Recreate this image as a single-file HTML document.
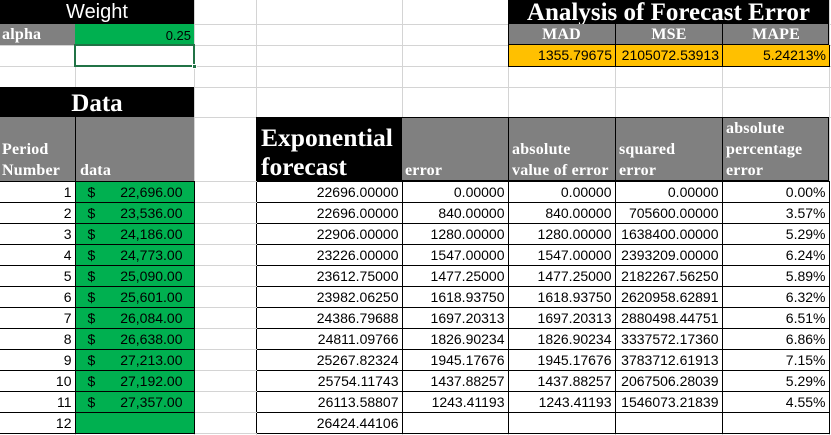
<!DOCTYPE html>
<html><head><meta charset="utf-8"><style>
*{margin:0;padding:0;box-sizing:border-box}
body{width:831px;height:435px;overflow:hidden;background:#fff;position:relative;font-family:"Liberation Sans",sans-serif}
.gv{position:absolute;top:0;width:1px;height:435px;background:#d4d4d4}
.gh{position:absolute;left:0;height:1px;width:831px;background:#d4d4d4}
.b{position:absolute}
.hd{font-family:"Liberation Serif",serif;font-weight:bold;color:#fff}
.sm{font-size:16px;letter-spacing:0.2px}
table{position:absolute;left:0;top:181px;border-collapse:collapse;table-layout:fixed;font-size:14px}
td{height:21px;border:1px solid #000;text-align:right;padding:0 3px 0 0;white-space:nowrap;line-height:19px;overflow:hidden}
td.c{border-top:1px solid #d4d4d4;border-bottom:1px solid #d4d4d4;border-right:none}
td.a{border-left:none}
td.g{background:#00b050;text-align:left;padding-left:12px;padding-right:11px}
td.g span{float:right}
</style></head><body>
<div class="gv" style="left:75px"></div><div class="gv" style="left:194px"></div><div class="gv" style="left:256px"></div><div class="gv" style="left:402px"></div><div class="gv" style="left:508px"></div><div class="gv" style="left:615px"></div><div class="gv" style="left:722px"></div><div class="gv" style="left:829px"></div>
<div class="gh" style="top:24px"></div><div class="gh" style="top:45px"></div><div class="gh" style="top:66px"></div><div class="gh" style="top:87px"></div><div class="gh" style="top:117px"></div>

<div class="b" style="left:0;top:0;width:194px;height:24px;background:#000;color:#fff;font-size:20px;text-align:center;line-height:24px">Weight</div>
<div class="b hd sm" style="left:0;top:24px;width:75px;height:21px;background:#808080;line-height:21px;padding-left:2px">alpha</div>
<div class="b" style="left:75px;top:24px;width:119px;height:21px;background:#00b050;font-size:13px;line-height:23px;text-align:right;padding-right:3px">0.25</div>
<div class="b" style="left:74px;top:44px;width:121px;height:23px;border:2px solid #217346"></div>
<div class="b" style="left:192px;top:64px;width:5px;height:5px;background:#217346;border:1px solid #fff"></div>

<div class="b hd" style="left:0;top:87px;width:194px;height:30px;background:#000;font-size:25px;text-align:center;line-height:33px">Data</div>
<div class="b hd sm" style="left:0;top:117px;width:75px;height:64px;background:#808080;line-height:21px;padding:22px 0 0 2px">Period<br>Number</div>
<div class="b hd sm" style="left:75px;top:117px;width:119px;height:64px;background:#808080;border-left:1px solid #000;line-height:21px;padding:43px 0 0 4px">data</div>

<div class="b hd" style="left:256px;top:117px;width:146px;height:64px;background:#000;font-size:25.5px;line-height:29px;padding:6px 0 0 5px;white-space:nowrap">Exponential<br>forecast</div>
<div class="b hd" style="left:402px;top:117px;width:427px;height:64px;background:#808080;border:1px solid #000;border-left:none"></div>
<div class="b hd sm" style="left:402px;top:117px;width:106px;height:64px;line-height:21px;padding:43px 0 0 3px">error</div>
<div class="b hd sm" style="left:508px;top:117px;width:107px;height:64px;border-left:1px solid #000;line-height:21px;padding:22px 0 0 3px;white-space:nowrap">absolute<br>value of error</div>
<div class="b hd sm" style="left:615px;top:117px;width:107px;height:64px;border-left:1px solid #000;line-height:21px;padding:22px 0 0 3px">squared<br>error</div>
<div class="b hd sm" style="left:722px;top:117px;width:107px;height:64px;border-left:1px solid #000;line-height:21px;padding:1px 0 0 3px;white-space:nowrap">absolute<br>percentage<br>error</div>

<div class="b hd" style="left:508px;top:0;width:321px;height:24px;background:#000;font-size:25px;text-align:center;line-height:25px;white-space:nowrap">Analysis of Forecast Error</div>
<div class="b hd" style="left:508px;top:24px;width:321px;height:21px;background:#808080;border:1px solid #000;border-top:none"></div>
<div class="b hd sm" style="left:508px;top:24px;width:107px;height:21px;text-align:center;line-height:21px">MAD</div>
<div class="b hd sm" style="left:615px;top:24px;width:107px;height:21px;border-left:1px solid #000;text-align:center;line-height:21px">MSE</div>
<div class="b hd sm" style="left:722px;top:24px;width:107px;height:21px;border-left:1px solid #000;text-align:center;line-height:21px">MAPE</div>
<div class="b" style="left:508px;top:45px;width:322px;height:22px;background:#ffc000;border:1px solid #000;border-top:none"></div>
<div class="b" style="left:508px;top:45px;width:107px;height:21px;font-size:14px;text-align:right;line-height:21px;padding-right:3px">1355.79675</div>
<div class="b" style="left:615px;top:45px;width:107px;height:21px;border-left:1px solid #000;font-size:14px;text-align:right;line-height:21px;padding-right:3px">2105072.53913</div>
<div class="b" style="left:722px;top:45px;width:107px;height:21px;border-left:1px solid #000;font-size:14px;text-align:right;line-height:21px;padding-right:3px">5.24213%</div>

<table>
<colgroup><col style="width:75px"><col style="width:119px"><col style="width:62px"><col style="width:146px"><col style="width:106px"><col style="width:107px"><col style="width:107px"><col style="width:107px"></colgroup>
<tr><td class="a">1</td><td class="g">$<span>22,696.00</span></td><td class="c"></td><td>22696.00000</td><td>0.00000</td><td>0.00000</td><td>0.00000</td><td>0.00%</td></tr>
<tr><td class="a">2</td><td class="g">$<span>23,536.00</span></td><td class="c"></td><td>22696.00000</td><td>840.00000</td><td>840.00000</td><td>705600.00000</td><td>3.57%</td></tr>
<tr><td class="a">3</td><td class="g">$<span>24,186.00</span></td><td class="c"></td><td>22906.00000</td><td>1280.00000</td><td>1280.00000</td><td>1638400.00000</td><td>5.29%</td></tr>
<tr><td class="a">4</td><td class="g">$<span>24,773.00</span></td><td class="c"></td><td>23226.00000</td><td>1547.00000</td><td>1547.00000</td><td>2393209.00000</td><td>6.24%</td></tr>
<tr><td class="a">5</td><td class="g">$<span>25,090.00</span></td><td class="c"></td><td>23612.75000</td><td>1477.25000</td><td>1477.25000</td><td>2182267.56250</td><td>5.89%</td></tr>
<tr><td class="a">6</td><td class="g">$<span>25,601.00</span></td><td class="c"></td><td>23982.06250</td><td>1618.93750</td><td>1618.93750</td><td>2620958.62891</td><td>6.32%</td></tr>
<tr><td class="a">7</td><td class="g">$<span>26,084.00</span></td><td class="c"></td><td>24386.79688</td><td>1697.20313</td><td>1697.20313</td><td>2880498.44751</td><td>6.51%</td></tr>
<tr><td class="a">8</td><td class="g">$<span>26,638.00</span></td><td class="c"></td><td>24811.09766</td><td>1826.90234</td><td>1826.90234</td><td>3337572.17360</td><td>6.86%</td></tr>
<tr><td class="a">9</td><td class="g">$<span>27,213.00</span></td><td class="c"></td><td>25267.82324</td><td>1945.17676</td><td>1945.17676</td><td>3783712.61913</td><td>7.15%</td></tr>
<tr><td class="a">10</td><td class="g">$<span>27,192.00</span></td><td class="c"></td><td>25754.11743</td><td>1437.88257</td><td>1437.88257</td><td>2067506.28039</td><td>5.29%</td></tr>
<tr><td class="a">11</td><td class="g">$<span>27,357.00</span></td><td class="c"></td><td>26113.58807</td><td>1243.41193</td><td>1243.41193</td><td>1546073.21839</td><td>4.55%</td></tr>
<tr><td class="a">12</td><td class="g"></td><td class="c"></td><td>26424.44106</td><td></td><td></td><td></td><td></td></tr>
</table>
</body></html>
